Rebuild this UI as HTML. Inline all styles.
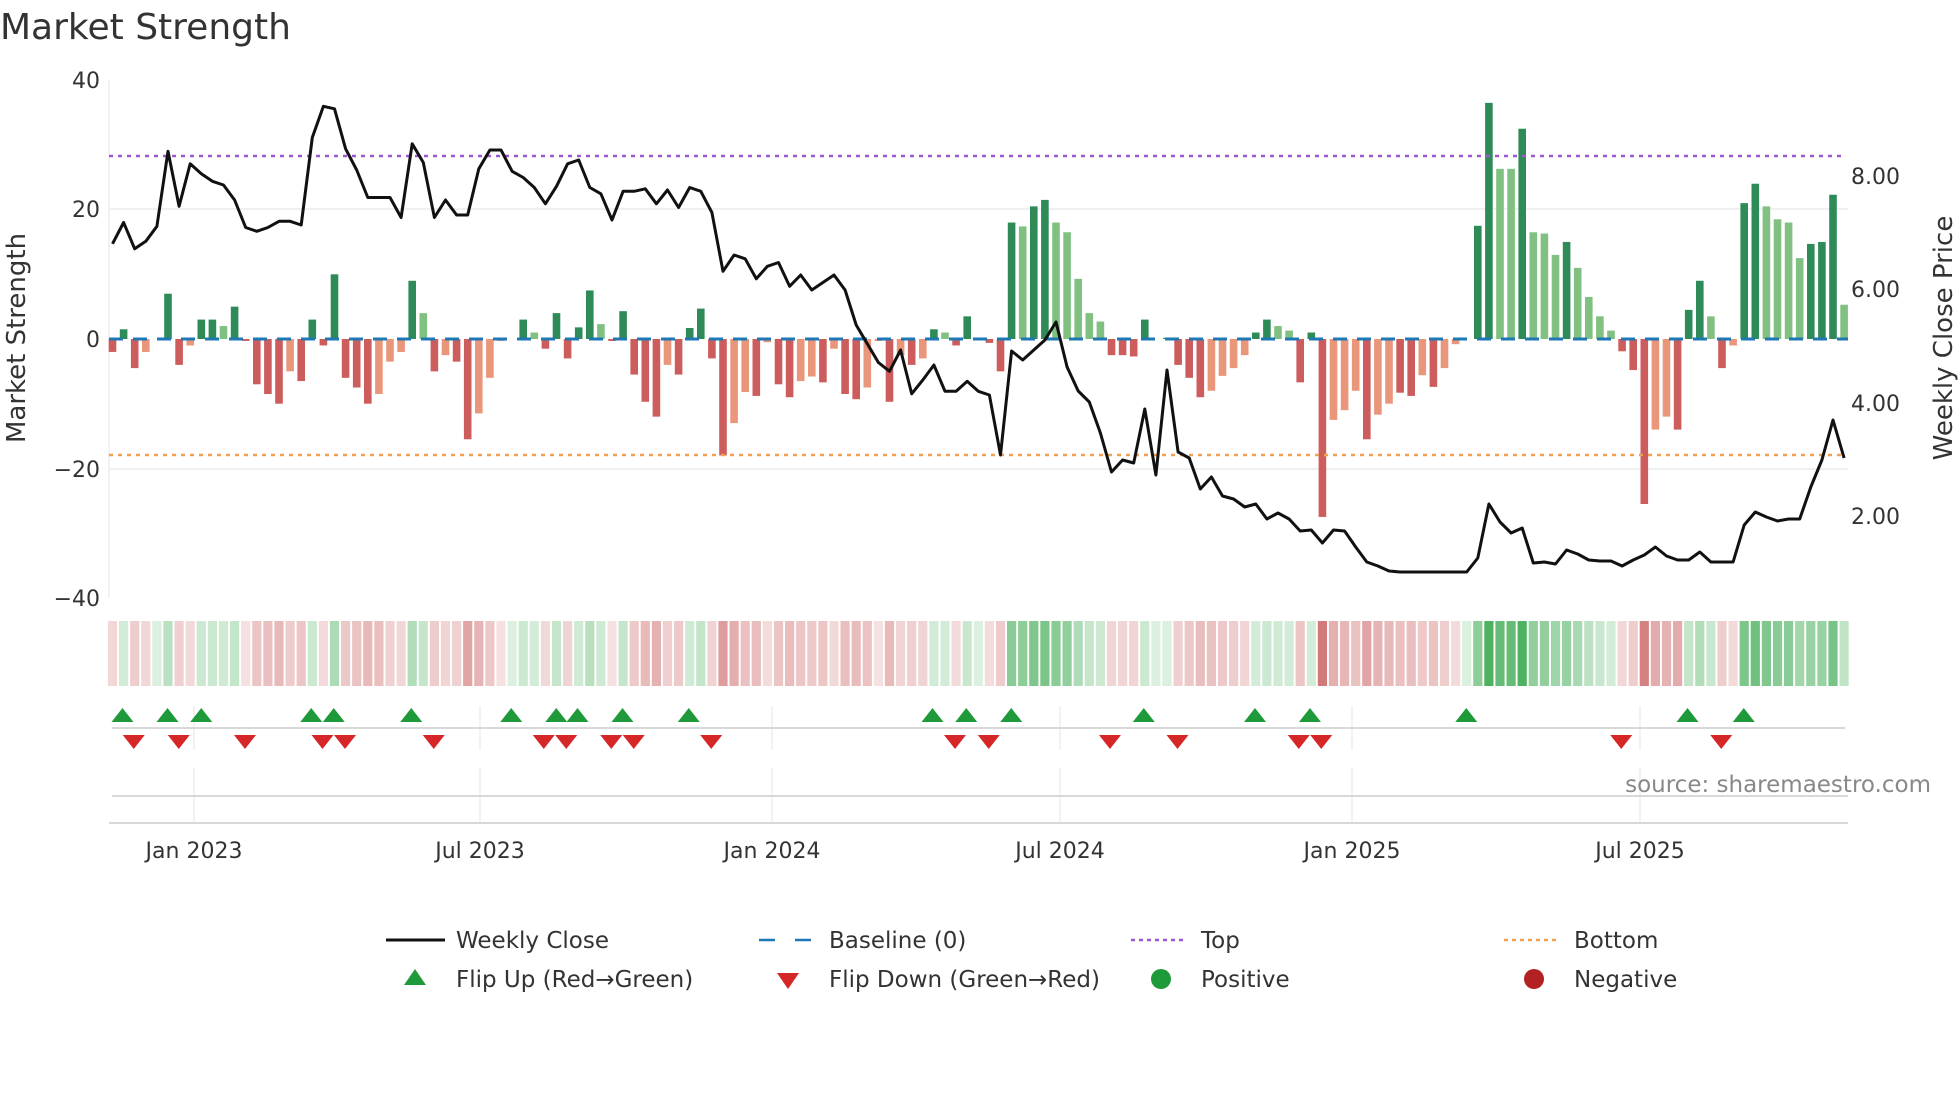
<!DOCTYPE html>
<html><head><meta charset="utf-8"><style>
html,body{margin:0;padding:0;background:#fff;}
svg{display:block;font-family:"DejaVu Sans","Liberation Sans",sans-serif;}
</style></head><body>
<svg id="s" width="1960" height="1102" viewBox="0 0 1960 1102" xmlns="http://www.w3.org/2000/svg">
<rect width="1960" height="1102" fill="#fff"/>
<text x="0" y="39" font-size="36" fill="#333">Market Strength</text>
<line x1="109" y1="80" x2="109" y2="598" stroke="#eee" stroke-width="1.5"/>
<line x1="109" y1="209" x2="1848" y2="209" stroke="#eef0f3" stroke-width="2"/>
<line x1="109" y1="469" x2="1848" y2="469" stroke="#eef0f3" stroke-width="2"/>
<g font-size="22" fill="#333" text-anchor="end">
<text x="100" y="88">40</text><text x="100" y="217">20</text><text x="100" y="347">0</text>
<text x="100" y="477">−20</text><text x="100" y="606">−40</text>
</g>
<g font-size="22" fill="#333">
<text x="1851" y="184">8.00</text><text x="1851" y="297">6.00</text>
<text x="1851" y="411">4.00</text><text x="1851" y="524">2.00</text>
</g>
<text transform="translate(25,338) rotate(-90)" font-size="26" fill="#333" text-anchor="middle">Market Strength</text>
<text transform="translate(1952,338) rotate(-90)" font-size="26" fill="#333" text-anchor="middle">Weekly Close Price</text>
<g id="bars"></g>
<line x1="109" y1="339" x2="1848" y2="339" stroke="#1f77b4" stroke-width="3" stroke-dasharray="14,10"/>
<line x1="109" y1="156" x2="1845" y2="156" stroke="#9b59d0" stroke-width="2.5" stroke-dasharray="4,5"/>
<line x1="109" y1="455" x2="1845" y2="455" stroke="#f0a050" stroke-width="2.5" stroke-dasharray="4,5"/>
<polyline id="line" fill="none" stroke="#111" stroke-width="3" stroke-linejoin="round"/>
<g id="heat"></g>
<g stroke="#eee" stroke-width="1.5">
<line x1="194" y1="706" x2="194" y2="750"/><line x1="480" y1="706" x2="480" y2="750"/><line x1="772" y1="706" x2="772" y2="750"/><line x1="1060" y1="706" x2="1060" y2="750"/><line x1="1352" y1="706" x2="1352" y2="750"/><line x1="1640" y1="706" x2="1640" y2="750"/>
<line x1="194" y1="768" x2="194" y2="822"/><line x1="480" y1="768" x2="480" y2="822"/><line x1="772" y1="768" x2="772" y2="822"/><line x1="1060" y1="768" x2="1060" y2="822"/><line x1="1352" y1="768" x2="1352" y2="822"/><line x1="1640" y1="768" x2="1640" y2="822"/>
</g>
<line x1="112" y1="728" x2="1845" y2="728" stroke="#ccc" stroke-width="1.5"/>
<line x1="112" y1="796" x2="1848" y2="796" stroke="#ccc" stroke-width="1.5"/>
<line x1="109" y1="823" x2="1848" y2="823" stroke="#ccc" stroke-width="1.5"/>
<g id="marks"></g>
<text x="1931" y="792" font-size="23" fill="#888" text-anchor="end">source: sharemaestro.com</text>
<g font-size="22" fill="#333" text-anchor="middle">
<text x="194" y="858">Jan 2023</text><text x="480" y="858">Jul 2023</text><text x="772" y="858">Jan 2024</text>
<text x="1060" y="858">Jul 2024</text><text x="1352" y="858">Jan 2025</text><text x="1640" y="858">Jul 2025</text>
</g>
<g font-size="23" fill="#333">
<line x1="386" y1="940" x2="445" y2="940" stroke="#111" stroke-width="3"/><text x="456" y="948">Weekly Close</text>
<line x1="759" y1="940" x2="814" y2="940" stroke="#1f77b4" stroke-width="2.5" stroke-dasharray="16,20"/><text x="829" y="948">Baseline (0)</text>
<line x1="1131" y1="940" x2="1186" y2="940" stroke="#9b59d0" stroke-width="2.5" stroke-dasharray="4,4"/><text x="1201" y="948">Top</text>
<line x1="1504" y1="940" x2="1559" y2="940" stroke="#f0a050" stroke-width="2.5" stroke-dasharray="4,4"/><text x="1574" y="948">Bottom</text>
<polygon points="404,985 426,985 415,969" fill="#1e9a3a"/><text x="456" y="987">Flip Up (Red→Green)</text>
<polygon points="777,973 799,973 788,989" fill="#d62728"/><text x="829" y="987">Flip Down (Green→Red)</text>
<circle cx="1161" cy="979" r="10" fill="#1e9a3a"/><text x="1201" y="987">Positive</text>
<circle cx="1534" cy="979" r="10" fill="#b22222"/><text x="1574" y="987">Negative</text>
</g>
</svg>
<script>
var B=[[-2,'R'],[1.5,'G'],[-4.5,'R'],[-2,'r'],[0,'G'],[7,'G'],[-4,'R'],[-1,'r'],[3,'G'],[3,'G'],[2,'g'],[5,'G'],[-0.3,'R'],[-7,'R'],[-8.5,'R'],[-10,'R'],[-5,'r'],[-6.5,'R'],[3,'G'],[-1,'R'],[10,'G'],[-6,'R'],[-7.5,'R'],[-10,'R'],[-8.5,'r'],[-3.5,'r'],[-2,'r'],[9,'G'],[4,'g'],[-5,'R'],[-2.5,'r'],[-3.5,'R'],[-15.5,'R'],[-11.5,'r'],[-6,'r'],[-0.3,'r'],[0,'G'],[3,'G'],[1,'g'],[-1.5,'R'],[4,'G'],[-3,'R'],[1.8,'G'],[7.5,'G'],[2.3,'g'],[-0.3,'R'],[4.3,'G'],[-5.5,'R'],[-9.7,'R'],[-12,'R'],[-4,'r'],[-5.5,'R'],[1.7,'G'],[4.7,'G'],[-3,'R'],[-18,'R'],[-13,'r'],[-8.2,'r'],[-8.8,'R'],[-0.5,'r'],[-7,'R'],[-9,'R'],[-6.5,'r'],[-5.8,'r'],[-6.7,'R'],[-1.5,'r'],[-8.5,'R'],[-9.3,'R'],[-7.5,'r'],[-0.3,'r'],[-9.7,'R'],[-2.5,'r'],[-4,'R'],[-3,'r'],[1.5,'G'],[1,'g'],[-1,'R'],[3.5,'G'],[0,'G'],
[-0.6,'R'],[-5,'R'],[18,'G'],[17.4,'g'],[20.5,'G'],[21.5,'G'],[18,'g'],[16.5,'g'],[9.3,'g'],[4,'g'],[2.7,'g'],[-2.5,'R'],[-2.5,'R'],[-2.7,'R'],[3,'G'],[0,'G'],[0.2,'G'],[-4,'R'],[-6,'R'],[-9,'R'],[-8,'r'],[-5.7,'r'],[-4.5,'r'],[-2.5,'r'],[1,'G'],[3,'G'],[2,'g'],[1.3,'g'],[-6.7,'R'],[1,'G'],[-27.5,'R'],[-12.5,'r'],[-11,'r'],[-8,'r'],[-15.5,'R'],[-11.7,'r'],[-10,'r'],[-8.3,'R'],[-8.8,'R'],[-5.6,'r'],[-7.4,'R'],[-4.5,'r'],[-0.8,'r'],[0,'G'],[17.5,'G'],[36.5,'G'],[26.3,'g'],[26.3,'g'],[32.5,'G'],[16.5,'g'],[16.3,'g'],[13,'g'],[15,'G'],[11,'g'],[6.5,'g'],[3.5,'g'],[1.3,'g'],[-1.9,'R'],[-4.8,'R'],[-25.5,'R'],[-14,'r'],[-12,'r'],[-14,'R'],[4.5,'G'],[9,'G'],[3.5,'g'],[-4.5,'R'],[-1,'r'],[21,'G'],[24,'G'],[20.5,'g'],[18.5,'g'],[18,'g'],[12.5,'g'],[14.7,'G'],[15,'G'],[22.3,'G'],[5.3,'g']];
var Ld=[195,178,199,193,181,121,165,131,139,145,148,160,182,185,182,177,177,180,110,85,87,119,136,158,158,158,174,115,130,174,160,172,172,135,120,120,137,142,150,163,149,131,128,150,155,176,153,153,151,163,152,166,150,153,170,217,204,207,223,213,210,229,220,232,226,220,232,260,275,290,297,280,315,304,292,313,313,305,313];
var Lo=[395,455,351,360,350,340,322,367,391,402,433,472,460,463,409,475,370,452,458,489,477,496,499,507,504,519,513,519,531,530,543,530,531,547,562,566,571,572,572,572,572,572,572,572,558,504,522,533,528,563,562,564,550,554,560,561,561,566,560,555,547,556,560,560,552,562,562,562,525,512,517,521,519,519,487,460,420,458];
var L=Ld.map(function(v){return v*1.25}).concat(Lo);
var X=function(i){return 112.5+i*11.1};
var C={G:'#2e8b57',g:'#80c080',R:'#cd5c5c',r:'#e9967a'};
var ns='http://www.w3.org/2000/svg',bars=document.getElementById('bars'),heat=document.getElementById('heat');
function el(p,t,a){var e=document.createElementNS(ns,t);for(var k in a)e.setAttribute(k,a[k]);p.appendChild(e);return e;}
B.forEach(function(b,i){var v=b[0],x=X(i);
 if(Math.abs(v)>0.05){var y=339-6.47*v;el(bars,'rect',{x:x-3.8,y:Math.min(y,339),width:7.6,height:Math.abs(339-y),fill:C[b[1]]});}
 var a=Math.min(0.9,0.2+Math.abs(v)/45);
 var col=v>=0?'rgba(60,170,80,'+a+')':'rgba(200,90,90,'+a+')';
 if(Math.abs(v)<0.5)col=v>=0?'rgba(60,170,80,0.18)':'rgba(200,90,90,0.18)';
 el(heat,'rect',{x:x-4.6,y:621,width:9.2,height:65,fill:col});
});
document.getElementById('line').setAttribute('points',L.map(function(y,i){return X(i).toFixed(1)+','+y.toFixed(1)}).join(' '));
var up=[98,134,161,249,267,329,409,445,462,498,551,746,773,809,915,1004,1048,1173,1350,1395],dn=[107,143,196,258,276,347,435,453,489,507,569,764,791,888,942,1039,1057,1297,1377];
var m=document.getElementById('marks');
up.forEach(function(d){var x=d*1.25;el(m,'polygon',{points:(x-11)+',722 '+(x+11)+',722 '+x+',708',fill:'#1e9a3a'});});
dn.forEach(function(d){var x=d*1.25;el(m,'polygon',{points:(x-11)+',735 '+(x+11)+',735 '+x+',749',fill:'#d62728'});});
</script>
</body></html>
